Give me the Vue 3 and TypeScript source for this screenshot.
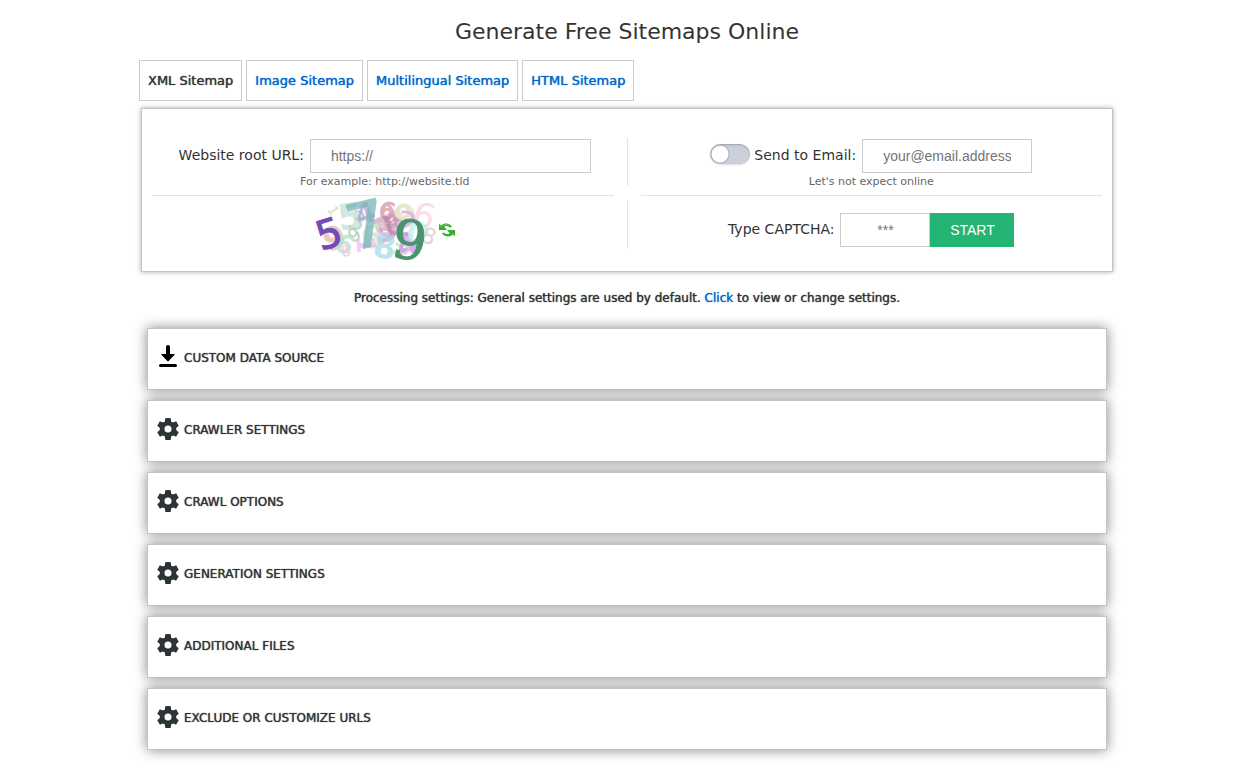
<script setup lang="ts">
import { ref } from 'vue'

const tabs = ['XML Sitemap', 'Image Sitemap', 'Multilingual Sitemap', 'HTML Sitemap']
const sections = [
  { title: 'CUSTOM DATA SOURCE', icon: 'download' },
  { title: 'CRAWLER SETTINGS', icon: 'gear' },
  { title: 'CRAWL OPTIONS', icon: 'gear' },
  { title: 'GENERATION SETTINGS', icon: 'gear' },
  { title: 'ADDITIONAL FILES', icon: 'gear' },
  { title: 'EXCLUDE OR CUSTOMIZE URLS', icon: 'gear' },
]
const url = ref('')
const sendEmail = ref(false)
const email = ref('')
const captcha = ref('')
</script>

<template>
  <main class="page">
    <div class="container">
      <h1>Generate Free Sitemaps Online</h1>

      <nav class="tabs">
        <a v-for="(tab, i) in tabs" :key="tab" href="#" class="tab" :class="{ active: i === 0 }">{{ tab }}</a>
      </nav>

      <form class="panel" @submit.prevent>
        <div class="cell top left">
          <div class="row">
            <label for="url">Website root URL:</label>
            <input id="url" v-model="url" class="field url" type="text" placeholder="https://" />
          </div>
          <small>For example: http://website.tld</small>
        </div>
        <span class="divider"></span>
        <div class="cell top">
          <div class="row">
            <div class="send">
              <input id="send" v-model="sendEmail" class="switch" type="checkbox" aria-label="Send to Email" />
              <label for="email">Send to Email:</label>
            </div>
            <input id="email" v-model="email" class="field email" type="text" placeholder="your@email.address" />
          </div>
          <small>Let's not expect online</small>
        </div>

        <div class="cell bottom left captcha">
          <svg width="120" height="60" viewBox="0 0 120 60" class="captcha-image" role="img" aria-label="Captcha">
            <g font-family="'DejaVu Sans', sans-serif" text-anchor="middle">
              <text transform="translate(14 13) rotate(58)" font-size="14" fill="#dcd8c0">1</text>
              <text transform="translate(37 29) rotate(-8)" font-size="36" font-weight="700" fill="#cfe9df">5</text>
              <text transform="translate(39 29) rotate(20)" font-size="26" fill="#c4d6d5">3</text>
              <text transform="translate(24 48) rotate(-25)" font-size="32" font-weight="700" fill="#ebb9b4" opacity=".8">9</text>
              <text transform="translate(25 52) rotate(30)" font-size="26" font-weight="700" fill="#b5e6c7" opacity=".8">6</text>
              <text transform="translate(32 56) rotate(-14)" font-size="15" fill="#f4cbe5">8</text>
              <text transform="translate(43 40) rotate(-35)" font-size="18" fill="#b7d0b9">9</text>
              <text transform="translate(53 23) rotate(-18)" font-size="28" font-weight="700" fill="#a6a0cb" opacity=".7">4</text>
              <text transform="translate(70 19) rotate(15)" font-size="24" font-weight="700" fill="#d98f88" opacity=".7">6</text>
              <text transform="translate(77 22) rotate(-25)" font-size="26" fill="#d7afd8">0</text>
              <text transform="translate(65 34) rotate(42)" font-size="32" font-weight="700" fill="#c789ac" opacity=".5">8</text>
              <text transform="translate(75 40) rotate(-24)" font-size="34" font-weight="700" fill="#b77aa0" opacity=".5">3</text>
              <text transform="translate(74 32) rotate(50)" font-size="24" font-weight="700" fill="#b77aa0" opacity=".5">8</text>
              <text transform="translate(59 48) rotate(-9)" font-size="32" font-weight="700" fill="#c7eac4" opacity=".8">6</text>
              <text transform="translate(68 58) rotate(8)" font-size="32" font-weight="700" fill="#a5d8f3" opacity=".7">8</text>
              <text transform="translate(79 54) rotate(32)" font-size="27" font-weight="700" fill="#bcebb8" opacity=".7">3</text>
              <text transform="translate(42 45) rotate(86)" font-size="26" font-weight="700" fill="#edb9ed" opacity=".7">1</text>
              <text transform="translate(95 26) rotate(-22)" font-size="32" font-weight="700" fill="#e5e1bc" opacity=".8">9</text>
              <text transform="translate(87 34) rotate(19)" font-size="32" fill="#deb5ed">2</text>
              <text transform="translate(106 27) rotate(16)" font-size="34" fill="#ffdce3">6</text>
              <text transform="translate(96 54) rotate(-22)" font-size="30" font-weight="700" fill="#c48aea" opacity=".7">4</text>
              <text transform="translate(100 43) rotate(12)" font-size="30" font-weight="700" fill="#c4f2ed" opacity=".8">0</text>
              <text transform="translate(86 54) rotate(31)" font-size="24" fill="#f3c2df" opacity=".7">5</text>
              <text transform="translate(111 43) rotate(22)" font-size="22" fill="#ddd5d9">8</text>
              <text transform="translate(57 46) rotate(-14)" font-size="62" fill="#78b5bb" stroke="#78b5bb" stroke-width="2" opacity=".75">7</text>
              <text transform="translate(18 47) rotate(-17)" font-size="40" fill="#714bb8" stroke="#714bb8">5</text>
              <text transform="translate(92 59) rotate(8)" font-size="54" font-family="'DejaVu Serif', serif" fill="#4a936e" stroke="#4a936e">9</text>
            </g>
          </svg>
          <button type="button" class="refresh" aria-label="Refresh captcha">
            <svg width="16" height="16" viewBox="0 0 16 16">
              <path d="M0 2l2.500 1.200C5 .8 10 .6 13 4.500l-2 1C9 3.600 7 3.400 5.200 4.800L8 8H0z" fill="#35ad28" />
              <path d="M16 14l-2.500-1.200C11 15.200 6 15.400 3 11.500l2-1c2 1.900 4 2.100 5.800.7L8 8h8z" fill="#35ad28" />
              <path d="M1 3.500l2 1M3.500 4c2.500-2 4.500-1.800 7 0M15 12.500l-2-1" fill="none" stroke="#6dcc55" />
            </svg>
          </button>
        </div>
        <span class="divider"></span>
        <div class="cell bottom">
          <div class="row">
            <label for="captcha">Type CAPTCHA:</label>
            <div class="captcha-entry">
              <input id="captcha" v-model="captcha" class="field code" type="text" placeholder="***" />
              <button type="submit" class="start">START</button>
            </div>
          </div>
        </div>
      </form>

      <p class="note">Processing settings: General settings are used by default. <a href="#">Click</a> to view or change settings.</p>

      <div class="sections">
        <button v-for="s in sections" :key="s.title" type="button" class="section">
          <svg v-if="s.icon === 'download'" width="24" height="24" viewBox="0 0 24 24">
            <path d="M12 2v9" stroke="#000" stroke-width="4" stroke-linecap="round" />
            <path d="M4.500 20.500h15" stroke="#000" stroke-width="3" stroke-linecap="round" />
            <path d="M5.400 9.800Q4.800 9 6 9h12q1.200 0 .6.800l-5.900 6.200q-.7.700-1.400 0z" fill="#000" />
          </svg>
          <svg v-else width="24" height="24" viewBox="1.500 1.500 21 21">
            <path
              fill="#2e3436"
              d="M19.140 12.940c.04-.3.060-.610.060-.940 0-.320-.020-.640-.070-.940l2.030-1.580c.180-.140.230-.410.120-.610l-1.920-3.320c-.120-.220-.370-.290-.590-.220l-2.390.960c-.5-.380-1.030-.7-1.620-.940L14.400 2.810c-.040-.240-.240-.410-.480-.410h-3.840c-.240 0-.430.170-.470.410L9.250 5.350C8.660 5.590 8.120 5.920 7.630 6.290L5.240 5.330c-.220-.080-.470 0-.590.220L2.740 8.870c-.120.210-.080.470.120.610l2.030 1.580c-.050.3-.090.630-.090.940s.020.640.070.940l-2.030 1.580c-.180.140-.230.410-.120.610l1.920 3.320c.120.220.370.290.590.220l2.390-.960c.5.380 1.030.7 1.620.940l.360 2.540c.050.240.240.410.480.410h3.840c.240 0 .440-.170.470-.410l.360-2.540c.590-.240 1.130-.560 1.620-.940l2.390.960c.220.080.470 0 .590-.220l1.920-3.320c.120-.220.070-.470-.120-.610zM12 15.100a3.100 3.100 0 1 1 0-6.200 3.100 3.100 0 0 1 0 6.200z"
            />
          </svg>
          <span>{{ s.title }}</span>
        </button>
      </div>
    </div>
  </main>
</template>

<style>
body {
  background: #fff;
}
</style>

<style scoped>
* {
  box-sizing: border-box;
}
.page {
  padding: 17px 0 32px 13px;
  font-family: Verdana, 'DejaVu Sans', sans-serif;
  color: #333;
}
.container {
  max-width: 976px;
  margin: 0 auto;
}
h1 {
  margin: 0 0 13px;
  font-size: 22px;
  line-height: 30px;
  font-weight: 400;
  text-align: center;
}
a {
  color: #0066cc;
  text-decoration: none;
}
.tabs {
  display: flex;
  flex-wrap: wrap;
  gap: 4px;
}
.tab {
  padding: 0 8px;
  border: 1px solid #ccc;
  font-size: 13px;
  line-height: 39px;
  text-shadow: 0 0 1px currentColor;
}
.tab.active {
  color: #333;
}
.panel {
  display: grid;
  grid-template-columns: 1fr 1px 1fr;
  column-gap: 13px;
  margin: 7px 2px 0;
  padding: 29px 10px 7px;
  border: 1px solid #c4c4c4;
  box-shadow: 0 0 5px #aaa;
}
.cell {
  text-align: center;
}
.cell.left {
  padding-left: 4px;
}
.top {
  height: 58px;
  border-bottom: 1px solid #e4e4e4;
}
.bottom {
  display: flex;
  justify-content: center;
  align-items: center;
  height: 68px;
}
.divider {
  width: 1px;
  height: 48px;
  background: #e4e4e4;
}
.divider:nth-of-type(2) {
  margin-top: 5px;
}
.row {
  display: flex;
  justify-content: center;
  align-items: center;
  gap: 6px;
  font-size: 14px;
}
.row label {
  padding-bottom: 3px;
}
.send {
  display: flex;
  align-items: center;
  gap: 4px;
}
.top .row {
  padding-top: 1px;
}
small {
  display: block;
  margin-top: 1px;
  font-size: 11px;
  line-height: 16px;
  color: #666;
}
.field {
  height: 34px;
  padding: 0 20px;
  border: 1px solid #ccc;
  background: #fff;
  font-family: Arial, 'Liberation Sans', sans-serif;
  font-size: 14px;
  color: #333;
}
.field::placeholder {
  color: #757575;
}
.url {
  width: 281px;
}
.email {
  width: 170px;
}
.code {
  width: 90px;
  text-align: center;
}
.captcha-entry {
  display: flex;
}
.start {
  width: 84px;
  height: 34px;
  padding: 0;
  border: 0;
  background: #24b574;
  color: #fff;
  font-family: Arial, 'Liberation Sans', sans-serif;
  font-size: 14px;
}
.switch {
  appearance: none;
  width: 40px;
  height: 20px;
  margin: 0 0 4px;
  border-radius: 10px;
  background: radial-gradient(circle at 10px 10px, #fff 8px, #a4a9b5 9px, transparent 10px), #cbd0da;
  box-shadow: inset 0 1px 2px #9a9fab, 0 1px 2px #ddd;
}
.switch:checked {
  background: radial-gradient(circle at 30px 10px, #fff 8px, #24b574 9px), #24b574;
}
.captcha {
  gap: 4px;
}
.captcha-image {
  overflow: visible;
}
.refresh {
  display: flex;
  padding: 0;
  border: 0;
  background: none;
}
.note {
  margin: 16px 0 0;
  font-size: 12px;
  line-height: 20px;
  text-align: center;
  text-shadow: 0 0 1px currentColor;
}
.sections {
  display: flex;
  flex-direction: column;
  gap: 10px;
  margin: 20px 8px 0;
}
.section {
  display: flex;
  align-items: center;
  gap: 4px;
  height: 62px;
  padding: 0 8px 4px;
  border: 1px solid #c4c4c4;
  background: #fff;
  box-shadow: 0 0 12px #888;
  color: #333;
  font-family: inherit;
  font-size: 12px;
  text-shadow: 0 0 1px currentColor;
}
.section span {
  padding-top: 2px;
}
</style>
